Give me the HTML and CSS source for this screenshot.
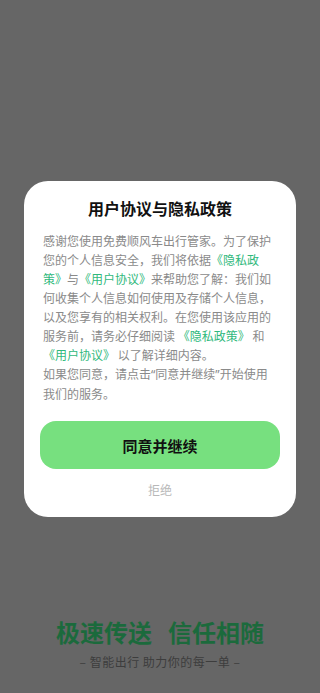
FILE: index.html
```html
<!DOCTYPE html>
<html lang="zh-CN">
<head>
    <meta charset="UTF-8">
    <meta name="viewport" content="width=device-width, initial-scale=1.0">
    <title>用户协议与隐私政策</title>
    <link rel="stylesheet" href="styles.css">
</head>
<body>
    <div class="splash">
        <div class="slogan">
            <div class="slogan-main">极速传送<span class="gap"></span>信任相随</div>
            <div class="slogan-sub">– 智能出行 助力你的每一单 –</div>
        </div>
    </div>

    <div class="mask">
        <div class="dialog">
            <div class="dialog-title">用户协议与隐私政策</div>
            <div class="dialog-text">
                <p>感谢您使用免费顺风车出行管家。为了保护您的个人信息安全，我们将依据<a class="link">《隐私政策》</a>与<a class="link">《用户协议》</a>来帮助您了解：我们如何收集个人信息如何使用及存储个人信息，以及您享有的相关权利。在您使用该应用的服务前，请务必仔细阅读 <a class="link">《隐私政策》</a> 和 <a class="link">《用户协议》</a> 以了解详细内容。</p>
                <p>如果您同意，请点击<span class="q">“</span>同意并继续<span class="q">”</span>开始使用我们的服务。</p>
            </div>
            <button class="btn-agree">同意并继续</button>
            <div class="btn-refuse">拒绝</div>
        </div>
    </div>
</body>
</html>
```

FILE: styles.css
```css
html, body {
    margin: 0;
    padding: 0;
}
body {
    width: 320px;
    height: 693px;
    background-color: #666666;
    font-family: "Noto Sans CJK SC", "Noto Sans", sans-serif;
    overflow: hidden;
}
.splash {
    height: 693px;
    display: flex;
    flex-direction: column;
    justify-content: flex-end;
}
.slogan {
    padding-bottom: 23px;
    text-align: center;
}
.slogan-main {
    color: #1b6a3c;
    font-size: 24px;
    font-weight: 700;
    line-height: 30px;
}
.slogan-main .gap {
    display: inline-block;
    width: 16px;
}
.slogan-sub {
    margin-top: 7px;
    color: #3d3d3d;
    font-size: 12px;
    line-height: 16px;
    letter-spacing: 0.5px;
}

/* dialog sits over the splash */
.mask {
    position: fixed;
    top: 0;
    left: 0;
    right: 0;
    bottom: 0;
    display: flex;
    justify-content: center;
    padding-top: 181px;
}
.dialog {
    box-sizing: border-box;
    width: 272px;
    height: 336px;
    background: #ffffff;
    border-radius: 24px;
    padding: 16px 19px 0;
    display: flex;
    flex-direction: column;
    align-items: center;
}
.dialog-title {
    font-size: 16px;
    font-weight: 700;
    line-height: 22px;
    color: #111111;
}
.dialog-text {
    margin-top: 12px;
    width: 234px;
    font-size: 12px;
    line-height: 19px;
    color: #8a8a8a;
}
.dialog-text p {
    margin: 0;
}
.dialog-text .q {
    font-family: "Noto Sans", sans-serif;
}
.link {
    color: #2fb97c;
}
.btn-agree {
    margin-top: 18px;
    width: 240px;
    height: 48px;
    border: none;
    border-radius: 16px;
    background-color: #77e07f;
    color: #111111;
    font-family: inherit;
    font-size: 15px;
    font-weight: 700;
}
.btn-refuse {
    margin-top: 11px;
    font-size: 12px;
    line-height: 20px;
    color: #b8b8b8;
}
```
